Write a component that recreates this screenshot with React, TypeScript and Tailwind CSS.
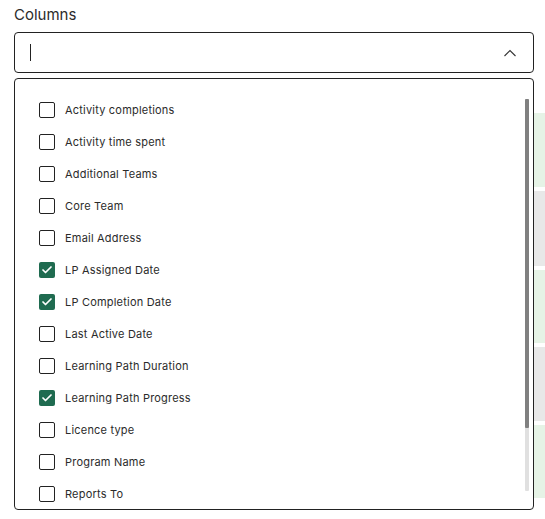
import { Check } from 'lucide-react'

const COLUMNS = [
  { label: 'Activity completions', checked: false },
  { label: 'Activity time spent', checked: false },
  { label: 'Additional Teams', checked: false },
  { label: 'Core Team', checked: false },
  { label: 'Email Address', checked: false },
  { label: 'LP Assigned Date', checked: true },
  { label: 'LP Completion Date', checked: true },
  { label: 'Last Active Date', checked: false },
  { label: 'Learning Path Duration', checked: false },
  { label: 'Learning Path Progress', checked: true },
  { label: 'Licence type', checked: false },
  { label: 'Program Name', checked: false },
  { label: 'Reports To', checked: false },
]

function Option({ label, checked }: { label: string; checked: boolean }) {
  return (
    <div className="flex items-center h-[32px] pl-[24px]">
      {checked ? (
        <div className="w-[16px] h-[16px] rounded-[2px] bg-[#1f6b50] flex items-center justify-center flex-shrink-0">
          <Check size={12} strokeWidth={3.5} color="#ffffff" />
        </div>
      ) : (
        <div className="w-[16px] h-[16px] rounded-[2px] border-[1.5px] border-[#222] bg-white flex-shrink-0" />
      )}
      <span className="ml-[10px] text-[11px] text-[#2b2b2b] tracking-[0.2px]">{label}</span>
    </div>
  )
}

export default function App() {
  return (
    <div className="relative w-[545px] h-[519px] bg-white overflow-hidden font-['Inter',sans-serif]">
      {/* table rows peeking out behind the menu */}
      <div className="absolute left-[534px] top-[113px] w-[20px] flex flex-col gap-[4px]">
        <div className="h-[74px] bg-[#e6f3e6]" />
        <div className="h-[75px] bg-[#e8e8e8]" />
        <div className="h-[73px] bg-[#e6f3e6]" />
        <div className="h-[74px] bg-[#e8e8e8]" />
        <div className="h-[73px] bg-[#e6f3e6]" />
      </div>

      <div className="relative pl-[14px] pt-[5px] w-[534px]">
        <p className="text-[15px] text-[#2b2b2b] leading-[20px]">Columns</p>
        <div className="mt-[7px] h-[41px] border border-[#222] rounded-[4px] flex items-center justify-between pl-[15px] pr-[16px]">
          <div className="w-[1px] h-[17px] bg-[#222]" />
          <svg width="14" height="8" viewBox="0 0 14 8" fill="none">
            <path d="M1.5 7L7 1.5L12.5 7" stroke="#333" strokeWidth="1.1" />
          </svg>
        </div>
        <div className="mt-[5px] h-[432px] border border-[#222] rounded-[4px] bg-white relative">
          <div className="pt-[15px]">
            {COLUMNS.map((c) => (
              <Option key={c.label} label={c.label} checked={c.checked} />
            ))}
          </div>
          <div className="absolute right-[4px] top-[20px] w-[4px] h-[392px] bg-[#e0e0e0] rounded-[1px]">
            <div className="h-[329px] bg-[#808080] rounded-[1px]" />
          </div>
        </div>
      </div>
    </div>
  )
}
